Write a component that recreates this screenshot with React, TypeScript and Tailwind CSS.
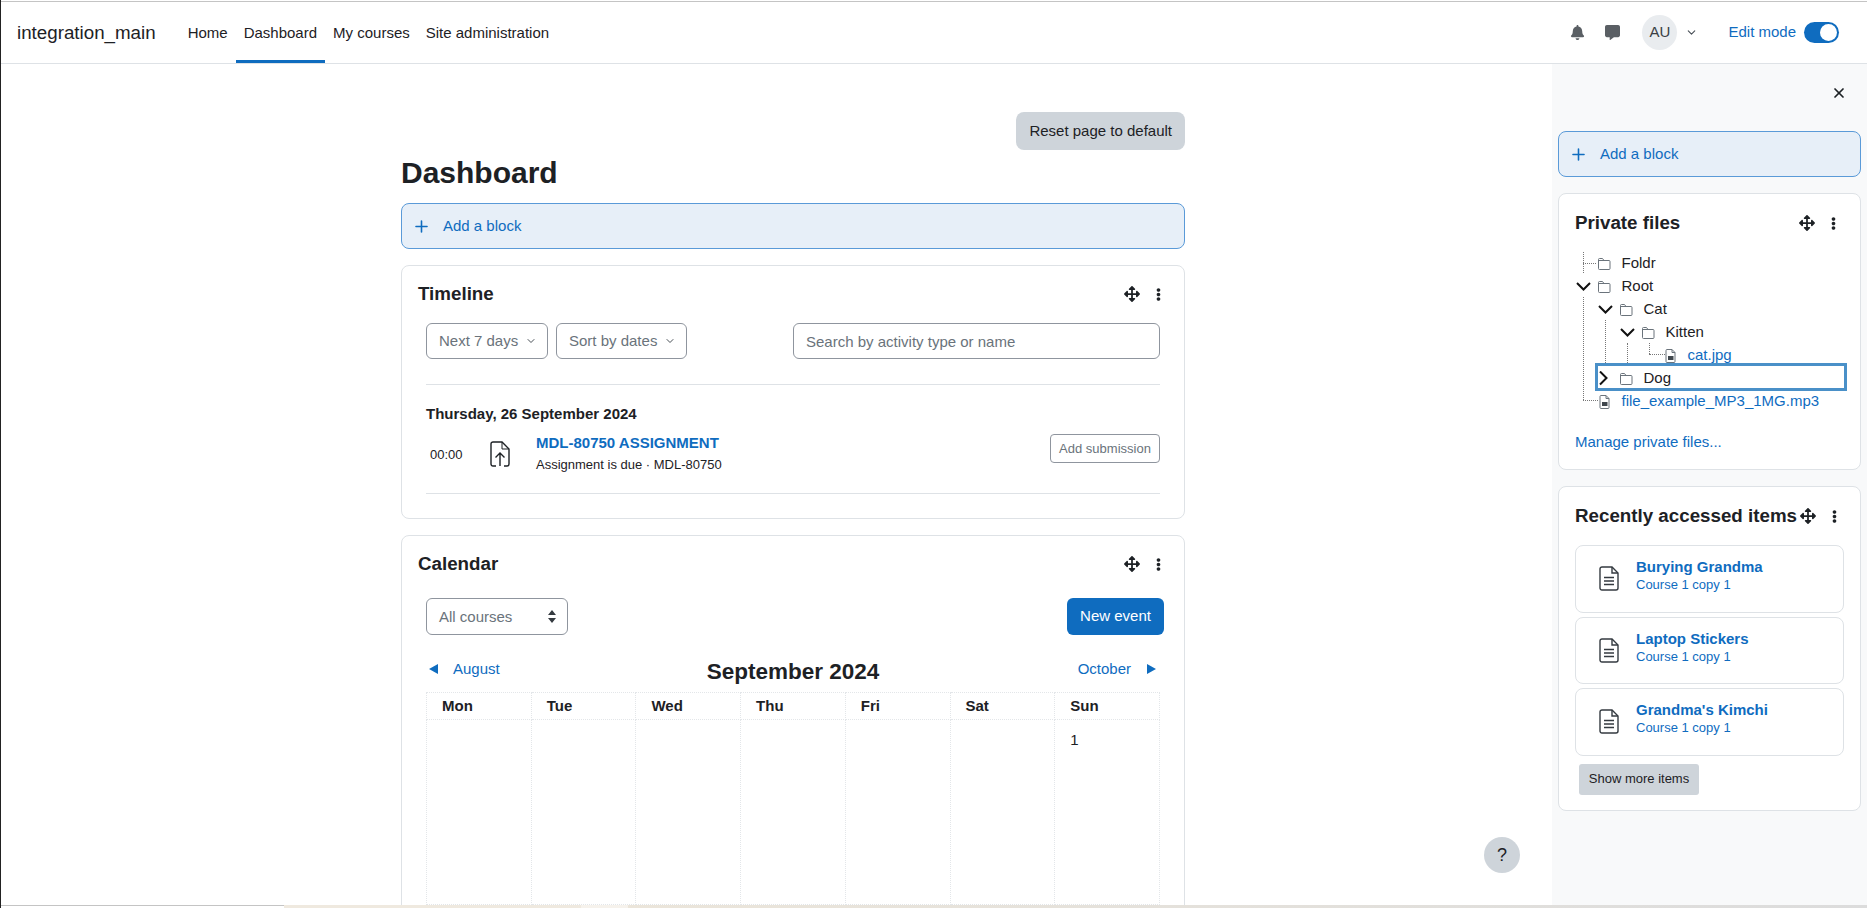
import { ChevronDown, Plus, X } from "lucide-react";
import { FaArrowsAlt, FaBell, FaCommentAlt, FaEllipsisV } from "react-icons/fa";

const navLinks = ["Home", "Dashboard", "My courses", "Site administration"];
const weekDays = ["Mon", "Tue", "Wed", "Thu", "Fri", "Sat", "Sun"];
const recentItems = ["Burying Grandma", "Laptop Stickers", "Grandma's Kimchi"];

function BlockControls() {
  return (
    <div className="flex shrink-0 items-center gap-[12px] text-[#1d2125]">
      <FaArrowsAlt size={16} />
      <FaEllipsisV size={13} />
    </div>
  );
}

function AddBlock() {
  return (
    <div className="flex h-[46px] items-center rounded-lg border border-[#5a9ad8] bg-[#e7eff8] pl-[10px] text-[15px] text-[#0f6cbf]">
      <Plus size={19} strokeWidth={2} />
      <span className="ml-[12px]">Add a block</span>
    </div>
  );
}

function FolderIcon() {
  return (
    <svg width="14" height="13" viewBox="0 0 14 13" fill="none" stroke="#6a737b" strokeWidth="1" className="shrink-0">
      <path d="M1.5 11.5V2.5a1 1 0 0 1 1-1h3l1.5 2h5a1 1 0 0 1 1 1v7a1 1 0 0 1-1 1h-9.500a1 1 0 0 1-1-1z" />
      <path d="M1.500 3.500H7" />
    </svg>
  );
}

function SmallFileIcon() {
  return (
    <svg width="11" height="14" viewBox="0 0 11 14" fill="none" className="ml-[2px] shrink-0">
      <path d="M1 1.500a1 1 0 0 1 1-1h5l3 3v9a1 1 0 0 1-1 1H2a1 1 0 0 1-1-1z" stroke="#6a737b" />
      <path d="M7 .5v3h3" stroke="#6a737b" />
      <rect x="3" y="7" width="5.500" height="4" fill="#3f464c" />
    </svg>
  );
}

function TreeChevron({ open }: { open: boolean }) {
  return (
    <svg width="16" height="15" viewBox="0 0 16 15" fill="none" stroke="#111" strokeWidth="2" className="shrink-0">
      {open ? <path d="M2 4l6.500 6.500L15 4" /> : <path d="M3 0.500l6.500 6.500L3 13.500" />}
    </svg>
  );
}

function TreeRow({
  indent,
  chevron,
  file,
  label,
}: {
  indent: string;
  chevron?: "open" | "closed";
  file?: boolean;
  label: string;
}) {
  return (
    <div className={`flex h-[23px] items-center ${indent}`}>
      <div className="flex w-[22px] shrink-0 justify-start">
        {chevron && <TreeChevron open={chevron === "open"} />}
      </div>
      <div className="flex w-[24.500px] shrink-0 justify-start">{file ? <SmallFileIcon /> : <FolderIcon />}</div>
      <span className={file ? "text-[#0f6cbf]" : "text-[#1d2125]"}>{label}</span>
    </div>
  );
}

function DocIcon() {
  return (
    <svg width="20" height="25" viewBox="0 0 20 25" fill="none" stroke="#343a40" strokeWidth="1.400" className="shrink-0">
      <path d="M1 3a2 2 0 0 1 2-2h10l6 6v15a2 2 0 0 1-2 2H3a2 2 0 0 1-2-2z" />
      <path d="M13 1v6h6" />
      <path d="M5 11.500h10M5 15h10M5 18.500h10" strokeWidth="1.600" />
    </svg>
  );
}

function SelectBox({ label, className }: { label: string; className: string }) {
  return (
    <div
      className={`flex h-[36px] items-center rounded-md border border-[#8f959e] pl-[12px] text-[15px] text-[#6a737b] ${className}`}
    >
      <span>{label}</span>
      <ChevronDown size={12} strokeWidth={2} className="ml-[7px] text-[#495057]" />
    </div>
  );
}

export default function App() {
  return (
    <div className="relative flex h-[908px] flex-col overflow-hidden border-l border-[#222] bg-white font-['Liberation_Sans',Arial,sans-serif] text-[15px] text-[#1d2125]">
      <div className="mt-[1px] h-[1px] shrink-0 bg-[#c4c4c4]" />

      <header className="flex h-[62px] shrink-0 items-stretch border-b border-[#dee2e6] pl-[16px]">
        <div className="flex items-center pt-[1px] text-[18.750px]">integration_main</div>
        <nav className="ml-[24px] flex">
          {navLinks.map((link) => (
            <div
              key={link}
              className={`flex items-center border-b-[3px] px-[8px] pt-[5px] ${
                link === "Dashboard" ? "border-[#0f6cbf]" : "border-transparent"
              }`}
            >
              {link}
            </div>
          ))}
        </nav>
        <div className="ml-auto flex items-center pr-[28px]">
          <FaBell size={15} className="text-[#5a5f64]" />
          <FaCommentAlt size={15} className="ml-[20px] text-[#5a5f64]" />
          <div className="ml-[22px] flex h-[35px] w-[35px] items-center justify-center rounded-full bg-[#e9ecef] text-[#3a3f44]">
            AU
          </div>
          <ChevronDown size={13} strokeWidth={2} className="ml-[8px] text-[#495057]" />
          <span className="ml-[30px] text-[#0f6cbf]">Edit mode</span>
          <div className="ml-[8px] flex h-[21px] w-[35px] items-center justify-end rounded-full bg-[#0f6cbf] pr-[2px]">
            <div className="h-[17px] w-[17px] rounded-full bg-white" />
          </div>
        </div>
      </header>

      <div className="flex min-h-0 flex-1">
        <main className="min-w-0 flex-1 overflow-hidden pl-[400px] pt-[48px]">
          <div className="w-[784px]">
            <div className="flex justify-end">
              <button className="h-[38px] rounded-lg bg-[#ced4da] px-[13px] text-[15px] text-[#1d2125]">
                Reset page to default
              </button>
            </div>
            <h1 className="mt-[5px] text-[30px] leading-[36px] font-bold">Dashboard</h1>
            <div className="mt-[12px]">
              <AddBlock />
            </div>

            <section className="mt-[16px] h-[254px] rounded-lg border border-[#dee2e6] px-[16px] pt-[17px]">
              <div className="flex h-[22px] items-center justify-between pr-[3px]">
                <h2 className="text-[18.750px] font-bold">Timeline</h2>
                <BlockControls />
              </div>
              <div className="mt-[18px] px-[8px]">
                <div className="flex">
                  <SelectBox label="Next 7 days" className="w-[122px]" />
                  <SelectBox label="Sort by dates" className="ml-[8px] w-[131px]" />
                  <input
                    placeholder="Search by activity type or name"
                    className="ml-auto h-[36px] w-[367px] rounded-md border border-[#8f959e] px-[12px] text-[15px] placeholder:text-[#6a737b]"
                  />
                </div>
                <div className="mt-[25px] border-t border-[#dee2e6]" />
                <h3 className="mt-[20px] text-[15px] leading-[18px] font-bold">Thursday, 26 September 2024</h3>
                <div className="mt-[10px] flex h-[50px] items-start">
                  <span className="mt-[13px] ml-[4px] w-[60px] text-[13px] leading-[18px]">00:00</span>
                  <svg width="20" height="26" viewBox="0 0 20 26" fill="none" stroke="#1d2125" strokeWidth="1.400" className="mt-[8px] shrink-0">
                    <path d="M6 25H3a2 2 0 0 1-2-2V3a2 2 0 0 1 2-2h9l7 7v15a2 2 0 0 1-2 2h-3" />
                    <path d="M12 1v7h7" strokeWidth="1" />
                    <path d="M10 25V12M5.500 16.500L10 12l4.500 4.500" />
                  </svg>
                  <div className="ml-[26px] pt-[1px]">
                    <div className="text-[15px] leading-[18px] font-bold text-[#0f6cbf]">MDL-80750 ASSIGNMENT</div>
                    <div className="mt-[4px] text-[13px] leading-[18px]">Assignment is due · MDL-80750</div>
                  </div>
                  <button className="mt-[1px] ml-auto h-[29px] w-[110px] rounded border border-[#8f959e] text-[13px] text-[#6a737b]">
                    Add submission
                  </button>
                </div>
                <div className="mt-[10px] border-t border-[#dee2e6]" />
              </div>
            </section>

            <section className="mt-[16px] h-[500px] rounded-t-lg border border-[#dee2e6] px-[16px] pt-[17px]">
              <div className="flex h-[22px] items-center justify-between pr-[3px]">
                <h2 className="text-[18.750px] font-bold">Calendar</h2>
                <BlockControls />
              </div>
              <div className="mt-[23px] pl-[8px] pr-[4px]">
                <div className="flex justify-between">
                  <div className="flex h-[37px] w-[142px] items-center justify-between rounded-md border border-[#8f959e] pl-[12px] pr-[11px] text-[#6a737b]">
                    <span className="pt-[1px]">All courses</span>
                    <svg width="8" height="13" viewBox="0 0 8 13" fill="#343a40">
                      <path d="M4 0l4 5H0zM4 13L0 8h8z" />
                    </svg>
                  </div>
                  <button className="h-[37px] w-[97px] rounded-md bg-[#0f6cbf] text-white">New event</button>
                </div>
                <div className="mt-[20px] flex h-[38px] w-[734px] items-start justify-between text-[#0f6cbf]">
                  <div className="flex h-[28px] w-[200px] items-center pl-[3px]">
                    <span className="h-0 w-0 border-y-[5px] border-r-[9px] border-y-transparent border-r-[#0f6cbf]" />
                    <span className="ml-[15px]">August</span>
                  </div>
                  <div className="pt-[3px] text-[22.500px] leading-[28px] font-bold text-[#1d2125]">September 2024</div>
                  <div className="flex h-[28px] w-[200px] items-center justify-end pr-[4px]">
                    <span>October</span>
                    <span className="ml-[16px] h-0 w-0 border-y-[5px] border-l-[9px] border-y-transparent border-l-[#0f6cbf]" />
                  </div>
                </div>
                <table className="-mt-[1px] w-[734px] table-fixed border-collapse">
                  <thead>
                    <tr>
                      {weekDays.map((d) => (
                        <th key={d} className="h-[27px] border border-dotted border-[#e3e6e9] pl-[15px] text-left text-[15px] font-bold">
                          {d}
                        </th>
                      ))}
                    </tr>
                  </thead>
                  <tbody>
                    <tr>
                      {weekDays.map((d) => (
                        <td key={d} className="h-[185px] border border-dotted border-[#e3e6e9] pl-[15px] pt-[11px] align-top leading-[18px]">
                          {d === "Sun" ? "1" : ""}
                        </td>
                      ))}
                    </tr>
                  </tbody>
                </table>
              </div>
            </section>
          </div>
        </main>

        <aside className="w-[315px] shrink-0 bg-[#f8f9fa] pl-[6px] pr-[6px]">
          <div className="flex h-[67px] justify-end pr-[14px] pt-[21px]">
            <X size={16} strokeWidth={2.600} className="text-[#1d2125]" />
          </div>
          <AddBlock />

          <section className="mt-[16px] h-[277px] rounded-lg border border-[#dee2e6] bg-white pl-[16px] pr-[17px] pt-[17px]">
            <div className="flex h-[24px] items-center justify-between pr-[3px]">
              <h2 className="text-[18.750px] font-bold">Private files</h2>
              <BlockControls />
            </div>
            <div className="relative mt-[17px]">
              <TreeRow indent="" label="Foldr" />
              <TreeRow indent="" chevron="open" label="Root" />
              <TreeRow indent="pl-[22px]" chevron="open" label="Cat" />
              <TreeRow indent="pl-[44px]" chevron="open" label="Kitten" />
              <TreeRow indent="pl-[66px]" file label="cat.jpg" />
              <TreeRow indent="pl-[22px]" chevron="closed" label="Dog" />
              <TreeRow indent="" file label="file_example_MP3_1MG.mp3" />

              {/* dotted tree connectors */}
              <span className="absolute left-[8px] top-0 h-[21px] border-l border-dotted border-[#777]" />
              <span className="absolute left-[8px] top-[11px] w-[13px] border-t border-dotted border-[#777]" />
              <span className="absolute left-[8px] top-[45px] h-[103px] border-l border-dotted border-[#777]" />
              <span className="absolute left-[8px] top-[148px] w-[15px] border-t border-dotted border-[#777]" />
              <span className="absolute left-[30px] top-[68px] h-[45px] border-l border-dotted border-[#777]" />
              <span className="absolute left-[52px] top-[91px] h-[22px] border-l border-dotted border-[#777]" />
              <span className="absolute left-[74px] top-[91px] h-[11px] border-l border-dotted border-[#777]" />
              <span className="absolute left-[74px] top-[102px] w-[16px] border-t border-dotted border-[#777]" />

              {/* keyboard focus ring on the Dog row */}
              <span className="absolute left-[20px] top-[111px] h-[28px] w-[252px] border-[3px] border-[#4a90c8]" />
            </div>
            <div className="mt-[18px] text-[#0f6cbf]">Manage private files...</div>
          </section>

          <section className="mt-[16px] h-[325px] rounded-lg border border-[#dee2e6] bg-white pl-[16px] pr-[16px] pt-[17px]">
            <div className="flex h-[24px] items-center justify-between pr-[3px]">
              <h2 className="whitespace-nowrap text-[18.750px] font-bold">Recently accessed items</h2>
              <BlockControls />
            </div>
            <div className="mt-[17px] flex w-[269px] flex-col gap-[4px]">
              {recentItems.map((item) => (
                <div key={item} className="flex h-[67.500px] items-center rounded-lg border border-[#dee2e6] pl-[23px]">
                  <DocIcon />
                  <div className="ml-[17px] pb-[5px]">
                    <div className="text-[15px] leading-[18px] font-bold text-[#0f6cbf]">{item}</div>
                    <div className="text-[13px] leading-[18px] text-[#0f6cbf]">Course 1 copy 1</div>
                  </div>
                </div>
              ))}
            </div>
            <button className="mt-[8px] ml-[4px] h-[31px] w-[120px] rounded-[3px] bg-[#ced4da] text-[13px] text-[#1d2125]">
              Show more items
            </button>
          </section>
        </aside>
      </div>

      {/* floating help button */}
      <div className="absolute left-[1483px] top-[837px] flex h-[36px] w-[36px] items-center justify-center rounded-full bg-[#ced4da] text-[18px] text-[#1d2125]">
        ?
      </div>

      {/* strip of the window behind, at the very bottom */}
      <div className="absolute bottom-0 left-0 right-0 flex h-[3px]">
        <div className="h-[1px] w-[283px] bg-[#c4c4c4]" />
        <div className="w-[297px] bg-[#efe9df]" />
        <div className="w-[47px] bg-[#f6f2ec]" />
        <div className="flex-1 bg-gradient-to-r from-[#ebe5da] to-[#dcdcdc]" />
      </div>
    </div>
  );
}
